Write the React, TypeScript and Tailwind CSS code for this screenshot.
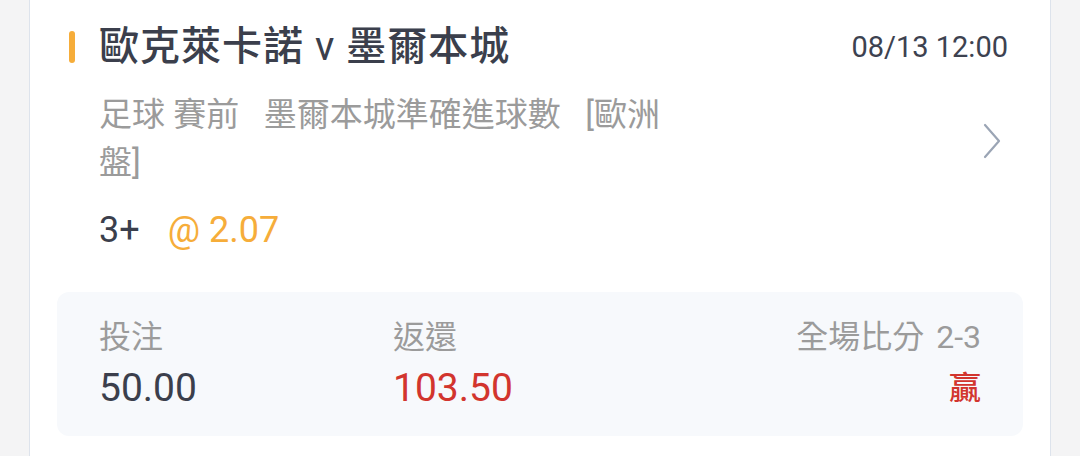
export default function App() {
    const cjk = { fontFamily: 'Roboto, "Noto Sans CJK TC", sans-serif' };
    return (
        <div className="w-[1080px] h-[456px] overflow-hidden bg-[#f4f4f5]" style={cjk}>
            <div className="ml-[29px] w-[1022px] h-[456px] bg-white border-x border-[#dde3ec] px-[27px] pt-[22px]">
                <div className="flex items-center h-[50px]">
                    <div className="ml-[12px] w-[6px] h-[32px] rounded-full bg-[#f6ad3a]" />
                    <div className="ml-[24px] text-[40px] leading-[50px] font-medium text-[#3b3f4c] tracking-[1px]">
                        歐克萊卡諾 <span className="font-normal">v</span> 墨爾本城
                    </div>
                    <div className="ml-auto mr-[15px] text-[29px] leading-[50px] text-[#3d4250]">08/13 12:00</div>
                </div>

                <div className="flex items-center">
                    <div className="ml-[42px] mt-[19px] w-[584px] text-[33px] leading-[48px] text-[#9b9b9b]">
                        足球 賽前&nbsp;&nbsp; 墨爾本城準確進球數&nbsp;&nbsp;&nbsp;[歐洲盤]
                    </div>
                    <svg className="ml-auto mr-[21px] mt-[22px]" width="20" height="36" viewBox="0 0 20 36" fill="none">
                        <path d="M3 2 L17 18 L3 34" stroke="#9ba5b5" strokeWidth="2.2" strokeLinecap="round" strokeLinejoin="round" />
                    </svg>
                </div>

                <div className="ml-[42px] mt-[23px] flex items-center h-[40px] text-[36px] leading-[40px]">
                    <span className="text-[#3b3f4c]">3+</span>
                    <span className="ml-[28px] text-[#f6ad3a]">@ 2.07</span>
                </div>

                <div className="mt-[42px] h-[144px] rounded-[12px] bg-[#f7f9fc] px-[42px] pt-[25px] flex">
                    <div className="w-[294px]">
                        <div className="text-[32px] leading-[40px] text-[#9b9b9b]">投注</div>
                        <div className="mt-[9px] text-[39px] leading-[44px] text-[#3b3f4c]">50.00</div>
                    </div>
                    <div className="w-[294px]">
                        <div className="text-[32px] leading-[40px] text-[#9b9b9b]">返還</div>
                        <div className="mt-[9px] text-[39px] leading-[44px] text-[#d2352e]">103.50</div>
                    </div>
                    <div className="flex-1 text-right">
                        <div className="text-[32px] leading-[40px] text-[#9b9b9b]">
                            全場比分<span className="ml-[12px]">2-3</span>
                        </div>
                        <div className="mt-[9px] text-[32px] leading-[44px] font-medium text-[#d2352e]">贏</div>
                    </div>
                </div>
            </div>
        </div>
    );
}
